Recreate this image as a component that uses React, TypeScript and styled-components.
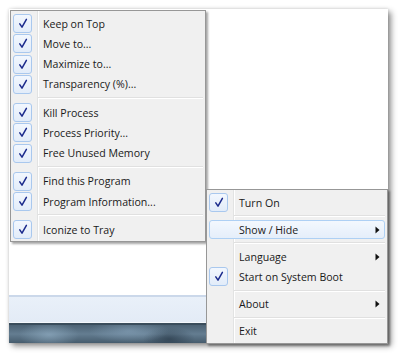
import React from 'react';
import styled, {createGlobalStyle} from 'styled-components';

const GlobalStyle = createGlobalStyle`
html, body {
margin: 0;
padding: 0;
background: #ffffff;
}
body {
font-family: "Open Sans", "Noto Sans", "Liberation Sans", sans-serif;
}
`;

type Entry =
    | {kind: 'item'; label: string; checked?: boolean; submenu?: boolean; hot?: boolean}
    | {kind: 'sep'};

const programEntries: Entry[] = [
    {kind: 'item', label: 'Keep on Top', checked: true},
    {kind: 'item', label: 'Move to...', checked: true},
    {kind: 'item', label: 'Maximize to...', checked: true},
    {kind: 'item', label: 'Transparency (%)...', checked: true},
    {kind: 'sep'},
    {kind: 'item', label: 'Kill Process', checked: true},
    {kind: 'item', label: 'Process Priority...', checked: true},
    {kind: 'item', label: 'Free Unused Memory', checked: true},
    {kind: 'sep'},
    {kind: 'item', label: 'Find this Program', checked: true},
    {kind: 'item', label: 'Program Information...', checked: true},
    {kind: 'sep'},
    {kind: 'item', label: 'Iconize to Tray', checked: true},
];

const trayEntries: Entry[] = [
    {kind: 'item', label: 'Turn On', checked: true},
    {kind: 'sep'},
    {kind: 'item', label: 'Show / Hide', submenu: true, hot: true},
    {kind: 'sep'},
    {kind: 'item', label: 'Language', submenu: true},
    {kind: 'item', label: 'Start on System Boot', checked: true},
    {kind: 'sep'},
    {kind: 'item', label: 'About', submenu: true},
    {kind: 'sep'},
    {kind: 'item', label: 'Exit'},
];

export default function App() {
    return (
        <>
            <GlobalStyle/>
            <Page>
                <Shot>
                    <Blank/>
                    <WindowBar/>
                    <Taskbar/>
                    <ProgramMenu>
                        <MenuEntries entries={programEntries}/>
                    </ProgramMenu>
                    <TrayMenu>
                        <MenuEntries entries={trayEntries}/>
                    </TrayMenu>
                </Shot>
            </Page>
        </>
    );
}

const MenuEntries = ({entries}: {entries: Entry[]}) => (
    <>
        {entries.map((entry, i) => entry.kind === 'sep'
            ? <Separator key={i}/>
            : (
                <Item key={i} $hot={!!entry.hot}>
                    <CheckCell>{entry.checked && <CheckBox/>}</CheckCell>
                    <Label>{entry.label}</Label>
                    <ArrowCell>{entry.submenu && <SubArrow/>}</ArrowCell>
                </Item>
            ))}
    </>
);

const CheckBox = () => (
    <CheckFrame>
        <svg width="10" height="11" viewBox="0 0 10 11">
            <path d="M1.8 5.8 L4 9.2 L8.4 1.3" fill="none" stroke="#1b2a8c" strokeWidth="1.5"
                  strokeLinecap="round" strokeLinejoin="round"/>
        </svg>
    </CheckFrame>
);

const SubArrow = () => (
    <svg width="5" height="8" viewBox="0 0 5 8">
        <path d="M0.5 0.5 L4.5 4 L0.5 7.5 Z" fill="#111"/>
    </svg>
);

const Page = styled.div`
width: 404px;
height: 360px;
padding: 9px;
box-sizing: border-box;
`;

const Shot = styled.div`
position: relative;
width: 379px;
height: 334px;
background: #ffffff;
display: flex;
flex-direction: column;
box-shadow: 3px 3px 6px rgba(0, 0, 0, 0.45), 0 0 3px rgba(0, 0, 0, 0.15);
`;

const Blank = styled.div`
flex: 1;
`;

const WindowBar = styled.div`
height: 28px;
box-sizing: border-box;
border-top: 2px solid #cbd8ea;
background: linear-gradient(#e9f0f9, #e3ebf6);
border-bottom: 1px solid #f4f7fb;
`;

const Taskbar = styled.div`
height: 20px;
box-sizing: border-box;
border-top: 2px solid #3a4d5c;
background:
    radial-gradient(ellipse 30px 14px at 40px 10px, rgba(160, 190, 212, 0.5), transparent),
    radial-gradient(ellipse 40px 12px at 120px 6px, rgba(150, 180, 205, 0.45), transparent),
    radial-gradient(ellipse 26px 12px at 160px 14px, rgba(30, 45, 60, 0.55), transparent),
    linear-gradient(#4c6274, #647d91 50%, #465c6d);
`;

const Menu = styled.div`
position: absolute;
box-sizing: border-box;
padding: 2px;
border: 1px solid #979797;
background-color: #f0f0f0;
background-image: linear-gradient(to right, transparent 26px, #e2e3e3 26px, #e2e3e3 27px, #ffffff 27px, #ffffff 28px, transparent 28px);
box-shadow: 2px 2px 2px rgba(0, 0, 0, 0.35);
display: flex;
flex-direction: column;
`;

const ProgramMenu = styled(Menu)`
top: 1px;
left: 1px;
width: 196px;
`;

const TrayMenu = styled(Menu)`
top: 180px;
left: 197px;
width: 182px;
height: 155px;
`;

const Item = styled.div<{$hot: boolean}>`
height: 20.33px;
box-sizing: border-box;
display: grid;
grid-template-columns: 24px 1fr 14px;
align-items: center;
border-radius: 3px;
border: 1px solid ${p => p.$hot ? '#aed0f4' : 'transparent'};
background: ${p => p.$hot ? 'linear-gradient(#f3f8fe, #e5eefa)' : 'transparent'};
`;

const CheckCell = styled.div`
display: flex;
align-items: center;
margin-left: -1px;
`;

const CheckFrame = styled.div`
width: 19px;
height: 19px;
box-sizing: border-box;
border: 1px solid #a9c8ee;
border-radius: 3px;
background: linear-gradient(#f2f7fe, #e2ecf9);
display: flex;
align-items: center;
justify-content: center;
`;

const Label = styled.span`
padding-left: 5px;
font-size: 10.6px;
color: #1a1a1a;
white-space: nowrap;
`;

const ArrowCell = styled.div`
display: flex;
align-items: center;
justify-content: center;
`;

const Separator = styled.div`
height: 7.7px;
margin-left: 25px;
display: flex;
flex-direction: column;
justify-content: center;

&::before {
    content: '';
    display: block;
    height: 1px;
    background: #e0e0e0;
    border-bottom: 1px solid #ffffff;
}
`;
